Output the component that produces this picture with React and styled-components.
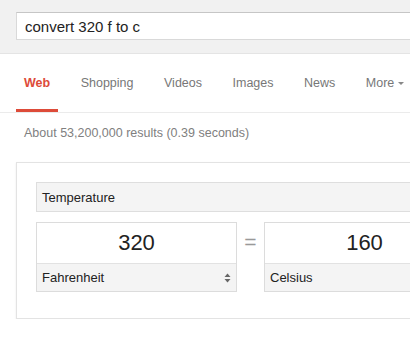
import React from "react";
import styled, { createGlobalStyle } from "styled-components";

const Global = createGlobalStyle`
  html, body { margin: 0; padding: 0; background: #fff; overflow: hidden; }
  body { font-family: "Liberation Sans", Arial, sans-serif; width: 410px; height: 344px; }
`;

const Page = styled.div`
  width: 410px;
  overflow: hidden;
`;

const Header = styled.header`
  height: 54px;
  box-sizing: border-box;
  background: #f1f1f1;
  border-bottom: 1px solid #e4e4e4;
  padding: 12px 0 0 16px;
`;

const SearchBox = styled.div`
  width: 560px;
  height: 28px;
  box-sizing: border-box;
  background: #fff;
  border: 1px solid #d9d9d9;
  border-top-color: #c6c6c6;
  display: flex;
  align-items: center;
  padding-left: 8px;
  font-size: 15px;
  color: #222;
`;

const Tabs = styled.nav`
  display: flex;
  gap: 14.5px;
  height: 59px;
  box-sizing: border-box;
  padding-left: 16px;
  border-bottom: 1px solid #ebebeb;
`;

const Tab = styled.div`
  display: flex;
  align-items: center;
  padding: 3px 8px 0;
  font-size: 12.5px;
  font-weight: ${(p) => (p.$active ? "bold" : "normal")};
  color: ${(p) => (p.$active ? "#dd4b39" : "#777")};
  border-bottom: 3px solid ${(p) => (p.$active ? "#dd4b39" : "transparent")};
  white-space: nowrap;
`;

const Caret = styled.span`
  display: inline-block;
  margin-left: 4px;
  border-left: 3px solid transparent;
  border-right: 3px solid transparent;
  border-top: 3px solid #888;
  margin-top: 1px;
`;

const Results = styled.div`
  padding: 12px 0 0 24px;
  font-size: 12.5px;
  line-height: 16px;
  color: #808080;
  white-space: nowrap;
`;

const Card = styled.section`
  margin: 21px 0 0 16px;
  width: 560px;
  box-sizing: border-box;
  border: 1px solid #e3e3e3;
  box-shadow: 0 1px 2px rgba(0, 0, 0, 0.08);
  padding: 19px 19px 26px;
  display: flex;
  flex-direction: column;
  gap: 10px;
`;

const UnitSelect = styled.div`
  height: 30px;
  box-sizing: border-box;
  background: #f4f4f4;
  border: 1px solid #dedede;
  display: flex;
  align-items: center;
  padding-left: 5px;
  font-size: 13px;
  color: #222;
`;

const Row = styled.div`
  display: flex;
  align-items: flex-start;
`;

const Field = styled.div`
  width: 201px;
  height: 70px;
  box-sizing: border-box;
  border: 1px solid #dcdcdc;
  display: flex;
  flex-direction: column;
  flex-shrink: 0;
`;

const Value = styled.div`
  height: 40px;
  display: flex;
  align-items: center;
  justify-content: center;
  font-size: 22px;
  color: #222;
`;

const FieldSelect = styled.div`
  flex: 1;
  background: #f4f4f4;
  border-top: 1px solid #e2e2e2;
  display: flex;
  align-items: center;
  justify-content: space-between;
  padding: 0 5px 0 5px;
  font-size: 13px;
  color: #222;
`;

const Equals = styled.div`
  width: 27px;
  height: 40px;
  flex-shrink: 0;
  display: flex;
  align-items: center;
  justify-content: center;
  font-size: 21px;
  color: #999;
`;

const Arrows = () => (
  <svg width="7" height="10" viewBox="0 0 7 10">
    <path d="M3.5 0.5 L6.5 4 L0.5 4 Z" fill="#666" />
    <path d="M3.5 9.5 L6.5 6 L0.5 6 Z" fill="#666" />
  </svg>
);

export default function App() {
  return (
    <Page>
      <Global />
      <Header>
        <SearchBox>convert 320 f to c</SearchBox>
      </Header>
      <Tabs>
        <Tab $active>Web</Tab>
        <Tab>Shopping</Tab>
        <Tab>Videos</Tab>
        <Tab>Images</Tab>
        <Tab>News</Tab>
        <Tab>
          More<Caret />
        </Tab>
      </Tabs>
      <Results>About 53,200,000 results (0.39 seconds)</Results>
      <Card>
        <UnitSelect>Temperature</UnitSelect>
        <Row>
          <Field>
            <Value>320</Value>
            <FieldSelect>
              Fahrenheit
              <Arrows />
            </FieldSelect>
          </Field>
          <Equals>=</Equals>
          <Field>
            <Value>160</Value>
            <FieldSelect>
              Celsius
              <Arrows />
            </FieldSelect>
          </Field>
        </Row>
      </Card>
    </Page>
  );
}
